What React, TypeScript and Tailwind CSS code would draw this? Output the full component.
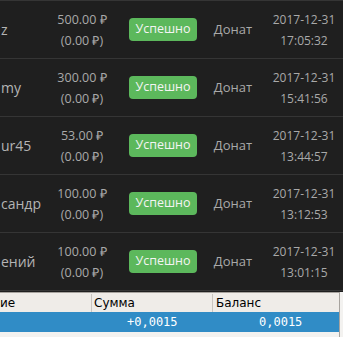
const ROWS = [
  { name: "z", amount: "500.00", date: "2017-12-31", time: "17:05:32" },
  { name: "my", amount: "300.00", date: "2017-12-31", time: "15:41:56" },
  { name: "ur45", amount: "53.00", date: "2017-12-31", time: "13:44:57" },
  { name: "сандр", amount: "100.00", date: "2017-12-31", time: "13:12:53" },
  { name: "ений", amount: "100.00", date: "2017-12-31", time: "13:01:15" },
];

function DonationRow({ row }: { row: (typeof ROWS)[number] }) {
  return (
    <div className="grid h-[58px] grid-cols-[50px_64px_95px_48px_94px] items-center border-t border-[#353535]">
      <div className="pl-[1px] text-[14px] text-[#b4b4b4]">{row.name}</div>
      <div className="text-center text-[12.5px] leading-[21px] text-[#a9a9a9]">
        <div>{row.amount} ₽</div>
        <div>(0.00 ₽)</div>
      </div>
      <div className="flex justify-center pl-[3px]">
        <span className="flex h-[23px] items-center rounded-[4px] bg-[#5cb85c] px-[6px] text-[12.5px] font-medium text-[#f4f4f4]">
          Успешно
        </span>
      </div>
      <div className="text-center text-[13px] text-[#a9a9a9]">Донат</div>
      <div className="text-center text-[12px] leading-[21px] text-[#a9a9a9]">
        <div>{row.date}</div>
        <div>{row.time}</div>
      </div>
    </div>
  );
}

export default function App() {
  return (
    <div className="flex h-[337px] w-[343px] flex-col overflow-hidden bg-[#1f1f1f] font-['Open_Sans',sans-serif]">
      <div className="shrink-0">
        {ROWS.map((r) => (
          <DonationRow key={r.time} row={r} />
        ))}
        <div className="h-[2px] border-t border-[#353535]" />
      </div>

      {/* transaction list of the wallet window below */}
      <div className="flex flex-1 flex-col bg-[#f3f2f0] font-['DejaVu_Sans',sans-serif] text-[12px]">
        <div className="flex w-[340px] flex-1 flex-col border-r border-t border-[#a7a39e]">
          <div className="grid h-[19px] grid-cols-[92px_121px_1fr] items-center bg-[#efece8] text-black">
            <div className="border-r border-[#c9c5c0]">ие</div>
            <div className="border-r border-[#c9c5c0] pl-[2px]">Сумма</div>
            <div className="pl-[3px]">Баланс</div>
          </div>
          <div className="grid h-[20px] grid-cols-[92px_121px_1fr] items-center bg-[#308cc6] font-['DejaVu_Sans_Mono',monospace] text-white">
            <div />
            <div className="pl-[35px]">+0,0015</div>
            <div className="pl-[46px]">0,0015</div>
          </div>
          <div className="flex-1" />
        </div>
      </div>
    </div>
  );
}
